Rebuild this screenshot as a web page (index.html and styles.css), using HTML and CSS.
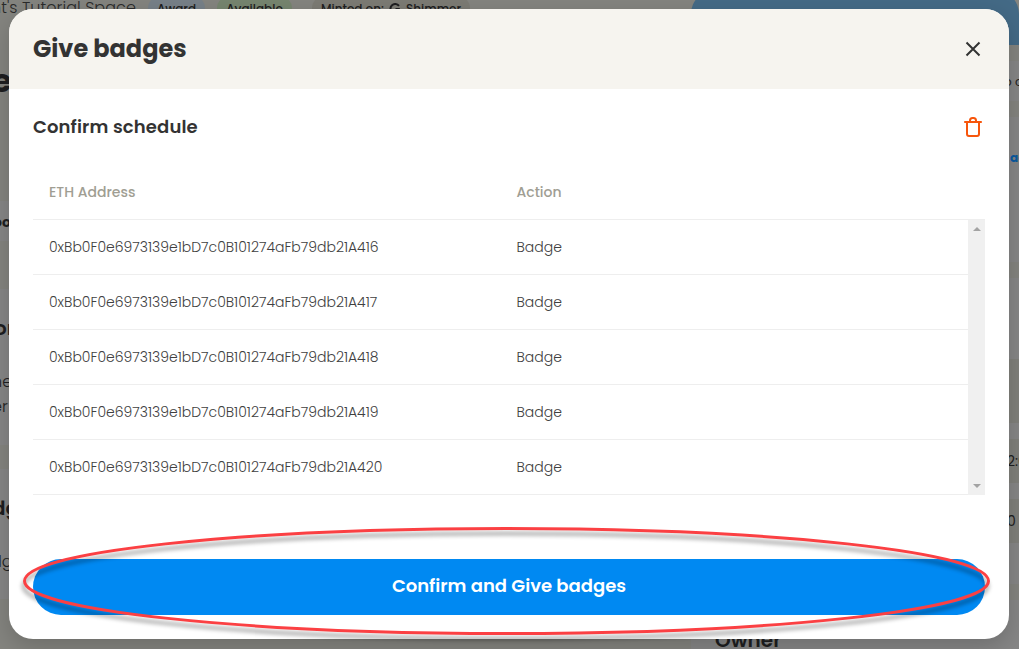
FILE: index.html
```
<!DOCTYPE html>
<html lang="en">
<head>
<meta charset="utf-8">
<title>Give badges</title>
<link rel="stylesheet" href="styles.css">
</head>
<body>
<div class="page">
  <div class="main">
    <div class="crumbs">
      <span class="space">nt's Tutorial Space</span>
      <span class="tag tag-award">Award</span>
      <span class="tag tag-available">Available</span>
      <span class="tag tag-network">Minted on:
        <svg viewBox="0 0 12 12" width="12" height="12"><path d="M10 2.800A4.800 4.800 0 1 0 9.800 9V6H6.500" fill="none" stroke="currentColor" stroke-width="2"/></svg>
        Shimmer</span>
    </div>
    <div class="title">e</div>
    <div class="card card-tab"><b>oo</b></div>
    <div class="card card-info"><h3>or</h3><p>ne<br>er</p></div>
    <div class="card card-badge"><h3>dg</h3><p>dg</p></div>
  </div>
  <div class="side">
    <div class="banner"></div>
    <div class="card side-copy">o c</div>
    <div class="card side-link"><b>ad</b></div>
    <div class="card side-details">
      <div class="field field-tall"></div>
      <div class="field">2:0</div>
      <div class="field">0</div>
    </div>
    <div class="card side-owner"><h3>Owner</h3></div>
  </div>
</div>
<section class="modal">
  <header class="modal-head">
    <h1>Give badges</h1>
    <svg class="icon" viewBox="0 0 24 24"><path d="M5.500 5.500l13 13M18.500 5.500l-13 13" fill="none" stroke="#333" stroke-width="2"/></svg>
  </header>
  <div class="modal-body">
    <div class="subhead">
      <h2>Confirm schedule</h2>
      <svg class="icon" viewBox="0 0 24 24"><path d="M3.200 7h17.600M6 7v12a2 2 0 0 0 2 2h8a2 2 0 0 0 2-2V7M9 7V5.500A2.500 2.500 0 0 1 11.500 3h1A2.500 2.500 0 0 1 15 5.500V7" fill="none" stroke="#f7560c" stroke-width="2"/></svg>
    </div>
    <div class="row row-head"><span class="th-address">ETH Address</span><span class="th-action">Action</span></div>
    <div class="list">
      <div class="rows">
        <div class="row"><span>0xBb0F0e6973139e1bD7c0B101274aFb79db21A416</span><span>Badge</span></div>
        <div class="row"><span>0xBb0F0e6973139e1bD7c0B101274aFb79db21A417</span><span>Badge</span></div>
        <div class="row"><span>0xBb0F0e6973139e1bD7c0B101274aFb79db21A418</span><span>Badge</span></div>
        <div class="row"><span>0xBb0F0e6973139e1bD7c0B101274aFb79db21A419</span><span>Badge</span></div>
        <div class="row"><span>0xBb0F0e6973139e1bD7c0B101274aFb79db21A420</span><span>Badge</span></div>
      </div>
      <div class="scrollbar"><i class="up"></i><i class="down"></i></div>
    </div>
    <button class="confirm">Confirm and Give badges</button>
  </div>
</section>
<svg class="marker" viewBox="0 0 1019 649"><ellipse cx="506.500" cy="581" rx="482" ry="52.500"/></svg>
</body>
</html>
```
FILE: styles.css
```
* { box-sizing: border-box; margin: 0; padding: 0; }
body {
  width: 1019px; height: 649px; overflow: hidden; position: relative;
  background: #84847f; color: #333;
  font-family: Poppins, Inter, "Open Sans", sans-serif;
  white-space: nowrap;
}
.page { display: flex; height: 649px; overflow: hidden; color: #1e1e20; }
.main { width: 691px; display: flex; flex-direction: column; }
.side { width: 328px; display: flex; flex-direction: column; }
.side > *, .main > * { flex-shrink: 0; }
.card { background: #868686; overflow: hidden; }

.crumbs { display: flex; height: 24px; margin-top: -4px; align-items: center; font-size: 12px; font-weight: 500; }
.space { width: 157px; margin-left: -9px; font-size: 16px; font-weight: 300; line-height: 24px; color: #2a2a2a; letter-spacing: .05px; }
.tag { display: flex; align-items: center; justify-content: center; gap: 5px; height: 24px; padding-top: 1px; border-radius: 12px; }
.tag-award { width: 57px; background: #778088; }
.tag-available { width: 75px; margin-left: 12px; background: #76856f; }
.tag-network { width: 158px; margin-left: 20px; background: #7c7b74; }
.title { height: 181px; padding-top: 34px; margin-left: -8px; font-size: 32px; font-weight: 700; line-height: 54px; }
.card-tab { height: 40px; line-height: 42px; font-size: 14px; text-indent: -7px; }
.card-info { height: 156px; margin-top: 48px; padding-top: 26px; }
.card h3 { font-size: 20px; line-height: 27px; font-weight: 600; }
.card-info h3 { text-indent: -6px; }
.card-badge h3 { text-indent: -8px; }
.card-info p { margin: 27px 0 0 -8px; font-size: 16px; line-height: 25px; font-weight: 300; }
.card-badge { height: 130px; margin-top: 24px; padding-top: 26px; }
.card-badge p { margin: 27px 0 0 -9px; font-size: 16px; line-height: 26px; font-weight: 300; }

.banner { height: 55px; margin-top: -10px; border-radius: 24px 24px 0 0; background: #446a86; }
.side-copy { height: 40px; margin-top: 16px; padding-left: 313px; font-size: 12px; line-height: 41px; }
.side-link { height: 145px; margin-top: 16px; padding: 32px 0 0 319px; font-size: 12px; line-height: 18px; color: #0a5aa0; }
.side-details { height: 306px; margin-top: 16px; padding-top: 81px; }
.field { height: 44px; margin-bottom: 16px; padding-left: 316px; background: #80807b; font-size: 14px; line-height: 44px; }
.field-tall { height: 64px; }
.side-owner { height: 80px; margin-top: 16px; padding: 27px 24px; }

.modal {
  position: absolute; left: 9px; top: 9px; width: 1000px; height: 630px;
  border-radius: 24px; overflow: hidden; background: #fff;
  box-shadow: 0 8px 24px rgba(0, 0, 0, .18);
}
.modal-head { display: flex; align-items: center; justify-content: space-between; height: 80px; padding: 0 24px; background: #f6f4ef; }
.modal-head h1 { font-size: 24px; font-weight: 700; line-height: 36px; }
.icon { width: 24px; height: 24px; display: block; }
.modal-body { padding: 24px; }
.subhead { display: flex; align-items: center; justify-content: space-between; height: 27px; }
.subhead h2 { font-size: 18px; font-weight: 600; letter-spacing: .13px; }
.row { display: grid; grid-template-columns: 467.5px 1fr; align-items: center; height: 55px; padding-left: 16px; border-bottom: 1px solid #eee; font-size: 14px; font-weight: 300; color: #404040; }
.row-head { margin-top: 25px; font-weight: 500; color: #a09e93; }
.list { display: flex; }
.rows { flex: 1; }
.scrollbar { width: 17px; display: flex; flex-direction: column; justify-content: space-between; align-items: center; padding: 7px 0 7px; background: #f0f0f0; }
.scrollbar i { border: 4px solid transparent; }
.scrollbar .up { border-top: 0; border-bottom-color: #a3a3a3; }
.scrollbar .down { border-bottom: 0; border-top-color: #a3a3a3; }
.confirm { display: block; width: 952px; height: 56px; margin-top: 64px; padding-bottom: 4px; border: 0; border-radius: 28px; background: #0089f2; color: #fff; font: inherit; font-size: 18px; font-weight: 600; }
.marker { position: absolute; left: 0; top: 0; width: 1019px; height: 649px; fill: none; stroke: #fb4043; stroke-width: 3; }
.marker ellipse { filter: drop-shadow(-1px 5px 2px rgba(0, 0, 0, .4)); }
```
